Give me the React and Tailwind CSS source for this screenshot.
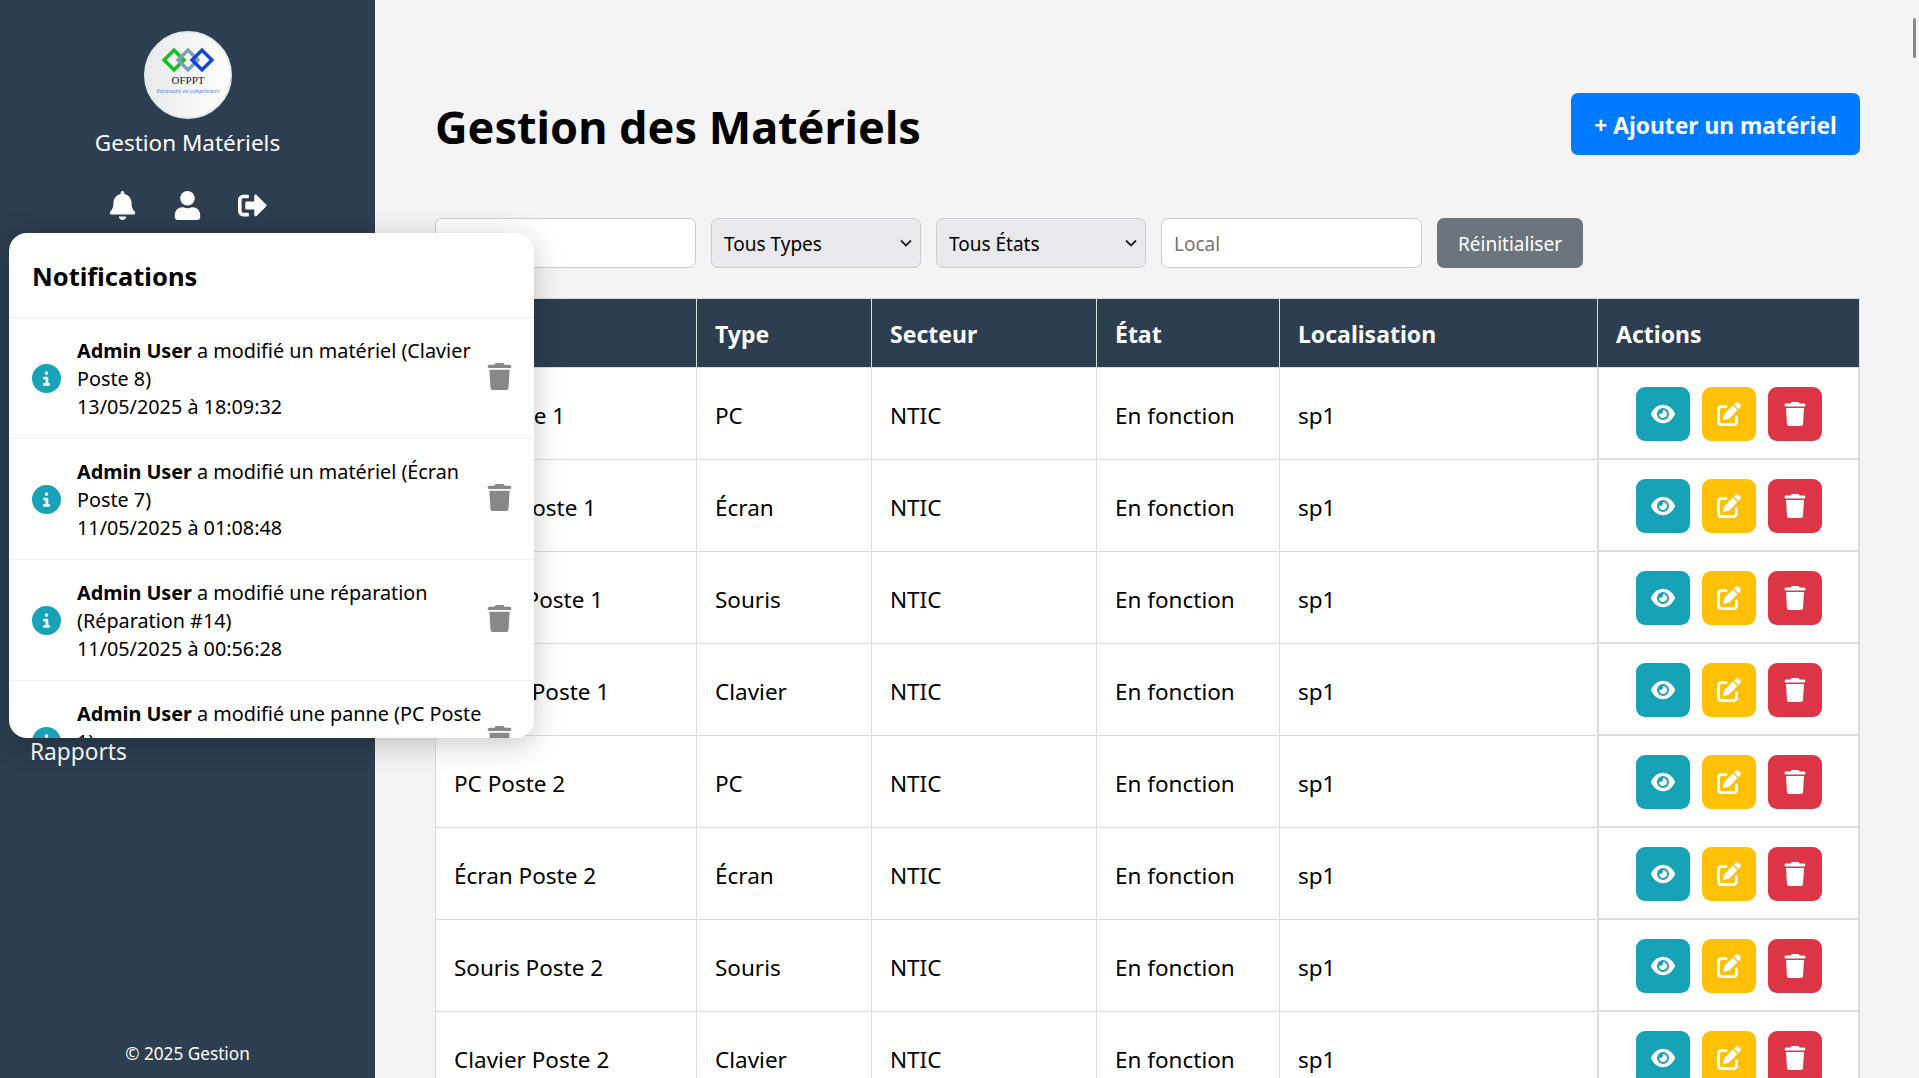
import React from "react";
import { FaBell, FaUser, FaSignOutAlt } from "react-icons/fa";
import { FaEye, FaPenToSquare, FaTrash, FaCircleInfo } from "react-icons/fa6";

const rows = [
  ["PC Poste 1", "PC"],
  ["Écran Poste 1", "Écran"],
  ["Souris Poste 1", "Souris"],
  ["Clavier Poste 1", "Clavier"],
  ["PC Poste 2", "PC"],
  ["Écran Poste 2", "Écran"],
  ["Souris Poste 2", "Souris"],
  ["Clavier Poste 2", "Clavier"],
  ["PC Poste 3", "PC"],
];

const notifications = [
  ["a modifié un matériel (Clavier Poste 8)", "13/05/2025 à 18:09:32"],
  ["a modifié un matériel (Écran Poste 7)", "11/05/2025 à 01:08:48"],
  ["a modifié une réparation (Réparation #14)", "11/05/2025 à 00:56:28"],
  ["a modifié une panne (PC Poste 1)", "10/05/2025 à 23:41:10"],
];

function Logo() {
  return (
    <div className="w-[88px] h-[88px] rounded-full border-2 border-[#e4ebee] bg-gradient-to-r from-[#e8eaeb] to-white flex items-center justify-center overflow-hidden">
      <svg width="84" height="84" viewBox="0 0 84 84">
        <rect x="21" y="20" width="14" height="14" transform="rotate(45 28 27)" fill="none" stroke="#12c01f" strokeWidth="3.5" />
        <rect x="35" y="20" width="14" height="14" transform="rotate(45 42 27)" fill="none" stroke="#7f9fb8" strokeWidth="3.5" />
        <rect x="49" y="20" width="14" height="14" transform="rotate(45 56 27)" fill="none" stroke="#1247d8" strokeWidth="3.5" />
        <text x="42" y="51" textAnchor="middle" fontFamily="'Liberation Serif', serif" fontSize="11" fill="#222">OFPPT</text>
        <text x="42" y="60" textAnchor="middle" fontFamily="'Liberation Serif', serif" fontStyle="italic" fontSize="5.8" fill="#5a6ee8">Partenaire en compétences</text>
      </svg>
    </div>
  );
}

function Notifications() {
  return (
    <div className="absolute left-[9px] top-[233px] w-[525px] h-[505px] bg-white rounded-[18px] shadow-[0_6px_30px_rgba(0,0,0,0.22)] overflow-hidden text-black z-10">
      <div className="h-[85px] pt-[3px] px-[23px] flex items-center border-b border-[#eeeeee] text-[25.5px] font-bold">
        Notifications
      </div>
      {notifications.map(([msg, date]) => (
        <div key={date} className="h-[121px] flex items-center pl-[23px] pr-[21px] border-b border-[#eeeeee]">
          <FaCircleInfo className="text-[#17a2b8] shrink-0" size={29} />
          <div className="ml-[16px] w-[409px] pt-[2px] text-[19.8px] leading-[28px]">
            <div><b>Admin User</b> {msg}</div>
            <div>{date}</div>
          </div>
          <FaTrash className="text-[#888888] shrink-0 ml-[4px] mb-[4px]" size={27} />
        </div>
      ))}
    </div>
  );
}

function Filter({ label, width }) {
  return (
    <div className={`relative ${width}`}>
      <select className="w-full h-full pl-[12px] pt-[2px] pr-[30px] appearance-none bg-[#e9e9ed] border border-[#cccccc] rounded-[7px]">
        <option>{label}</option>
      </select>
      <svg className="absolute right-[9px] top-[21px]" width="12" height="8" viewBox="0 0 12 8">
        <polyline points="1,1.5 6,6.5 11,1.5" fill="none" stroke="#222" strokeWidth="1.8" />
      </svg>
    </div>
  );
}

export default function App() {
  return (
    <div className="relative h-screen flex overflow-hidden bg-[#f4f4f4] text-black font-['Noto_Sans','Open_Sans',sans-serif]">
      <aside className="w-[375px] shrink-0 bg-[#2c3e50] text-white flex flex-col items-center pt-[31px] pb-[11px]">
        <Logo />
        <div className="mt-[8px] text-[22.5px] leading-[32px]">Gestion Matériels</div>
        <div className="mt-[32px] flex items-center gap-[36px]">
          <FaBell size={29} />
          <FaUser size={29} />
          <FaSignOutAlt size={29} />
        </div>
        <div className="self-start ml-[30px] mt-[516px] text-[22.7px] leading-[32px]">Rapports</div>
        <div className="mt-auto text-[17.2px] leading-[26px]">© 2025 Gestion</div>
      </aside>

      <Notifications />

      <main className="flex-1 pl-[60px] pr-[59px] pt-[93px]">
        <div className="flex items-center justify-between h-[62px]">
          <h1 className="pt-[6px] text-[45px] font-bold leading-[62px]">Gestion des Matériels</h1>
          <button className="w-[289px] h-[62px] pt-[5px] bg-[#007bff] text-white rounded-[7px] text-[22.8px] font-bold">
            + Ajouter un matériel
          </button>
        </div>

        <div className="mt-[63px] flex gap-[15px] h-[50px] text-[19px]">
          <input className="w-[261px] px-3 pt-[2px] bg-white border border-[#cccccc] rounded-[7px]" />
          <Filter label="Tous Types" width="w-[210px]" />
          <Filter label="Tous États" width="w-[210px]" />
          <input placeholder="Local" className="w-[261px] px-3 pt-[2px] bg-white border border-[#cccccc] rounded-[7px] placeholder:text-[#757575]" />
          <button className="w-[146px] pt-[2px] bg-[#6c757d] text-white rounded-[7px]">Réinitialiser</button>
        </div>

        <table className="mt-[30px] w-[1424px] table-fixed border-collapse text-[22.5px]">
          <colgroup>
            <col className="w-[261px]" />
            <col className="w-[175px]" />
            <col className="w-[225px]" />
            <col className="w-[183px]" />
            <col className="w-[318px]" />
            <col className="w-[262px]" />
          </colgroup>
          <thead>
            <tr className="h-[69px] bg-[#2c3e50] text-white text-left text-[23px]">
              {["Nom", "Type", "Secteur", "État", "Localisation", "Actions"].map((h) => (
                <th key={h} className="px-[18px] pt-[3px] border border-[#dddddd] font-bold">{h}</th>
              ))}
            </tr>
          </thead>
          <tbody>
            {rows.map(([name, type]) => (
              <tr key={name} className="h-[92px] bg-white">
                <td className="px-[18px] pt-[5px] border border-[#dddddd]">{name}</td>
                <td className="px-[18px] pt-[5px] border border-[#dddddd]">{type}</td>
                <td className="px-[18px] pt-[5px] border border-[#dddddd]">NTIC</td>
                <td className="px-[18px] pt-[5px] border border-[#dddddd]">En fonction</td>
                <td className="px-[18px] pt-[5px] border border-[#dddddd]">sp1</td>
                <td className="p-0 border border-[#dddddd]">
                  <div className="h-[91px] pt-[2px] flex items-center justify-center gap-[12px] border-x border-b border-[#dddddd]">
                    <button className="w-[54px] h-[54px] rounded-[9px] bg-[#17a2b8] text-white flex items-center justify-center">
                      <FaEye size={24} />
                    </button>
                    <button className="w-[54px] h-[54px] rounded-[9px] bg-[#ffc107] text-white flex items-center justify-center">
                      <FaPenToSquare size={24} />
                    </button>
                    <button className="w-[54px] h-[54px] rounded-[9px] bg-[#dc3545] text-white flex items-center justify-center">
                      <FaTrash size={24} />
                    </button>
                  </div>
                </td>
              </tr>
            ))}
          </tbody>
        </table>
      </main>

      <div className="absolute right-[3px] top-[18px] w-[3px] h-[40px] rounded-full bg-[#8a8a8a]" />
    </div>
  );
}
